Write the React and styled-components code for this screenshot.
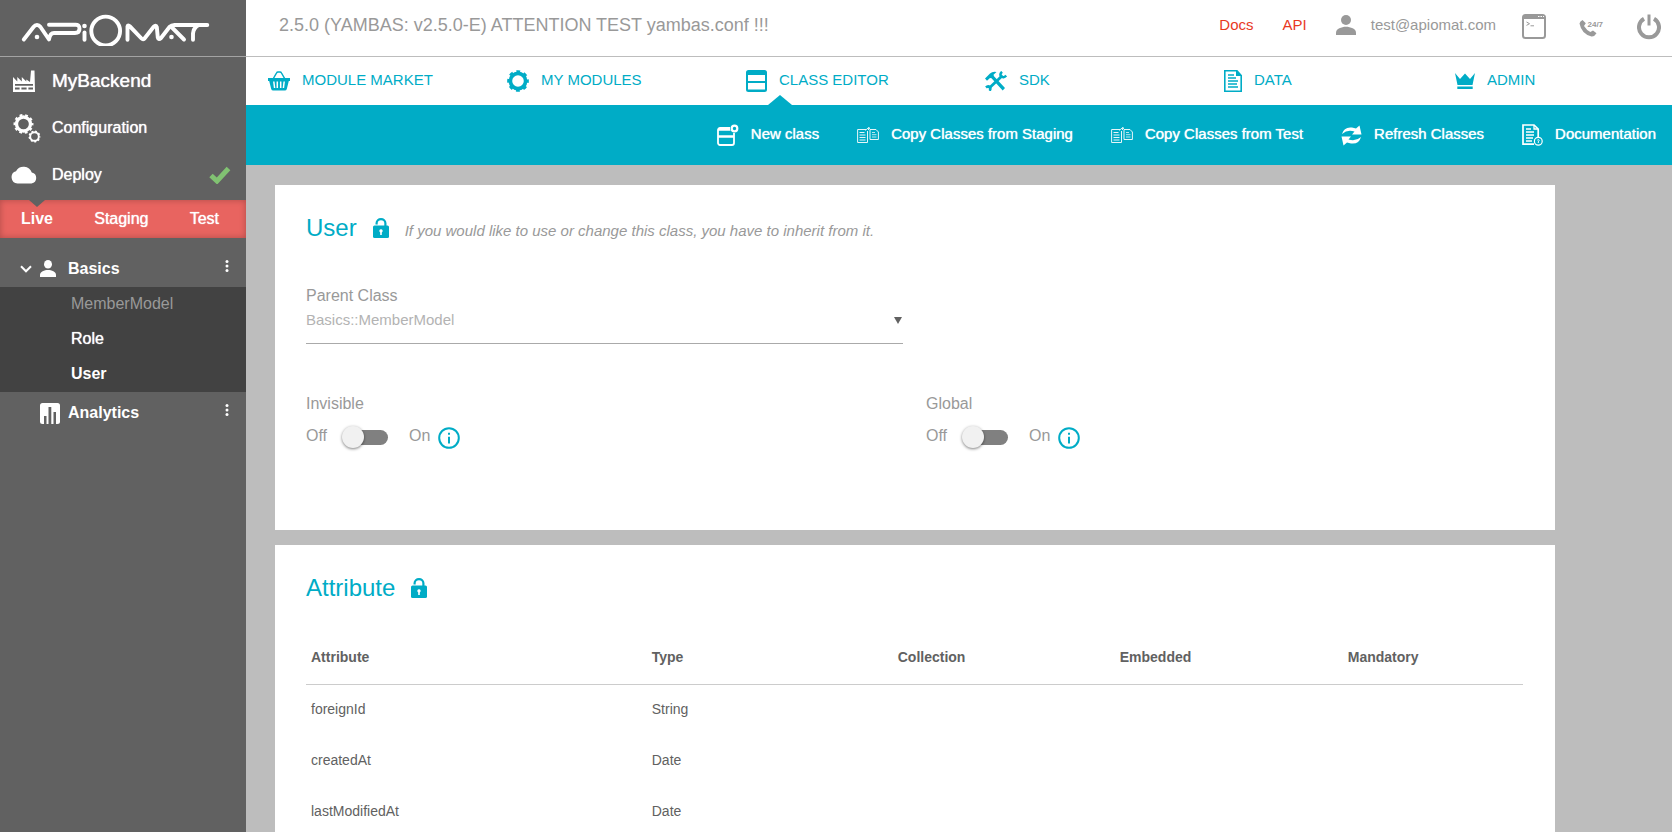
import React, { useState } from "react";
import styled, { createGlobalStyle, css } from "styled-components";

const teal = "#00acc6";
const gray = "#999";

const GlobalStyle = createGlobalStyle`
  * {
    box-sizing: border-box;
  }
  body {
    margin: 0;
    font-family: "Liberation Sans", Arial, sans-serif;
    font-size: 16px;
    line-height: 20px;
    color: ${gray};
    background: #bdbdbd;
  }
  svg {
    display: block;
    flex-shrink: 0;
  }
  a {
    color: inherit;
    text-decoration: none;
  }
  button {
    padding: 0;
    border: 0;
    background: none;
    color: inherit;
    font: inherit;
    cursor: pointer;
  }
`;

const Page = styled.div`
  display: flex;
  height: 100vh;
  overflow: hidden;
`;

/* ---------- sidebar ---------- */

const Sidebar = styled.aside`
  width: 246px;
  flex-shrink: 0;
  background: #616161;
  color: #fff;
`;

const LogoLink = styled.a`
  display: flex;
  height: 57px;
  padding: 14px 20px 0;
  border-bottom: 1px solid #a3a3a3;
`;

const MainMenu = styled.nav`
  display: flex;
  flex-direction: column;
  padding-bottom: 2px;
`;

const MenuLink = styled.a`
  display: flex;
  align-items: center;
  height: 47px;
  padding: 0 15px 0 11px;
  font-size: ${props => (props.$large ? "19px" : "16px")};
  text-shadow: 0 0 1px #fff;
`;

const MenuIcon = styled.span`
  display: flex;
  width: 41px;
`;

const Status = styled.span`
  margin-left: auto;
`;

const Stages = styled.nav`
  display: flex;
  justify-content: space-between;
  align-items: center;
  height: 38px;
  padding: 0 27px 0 21px;
  background: #e86460;
  box-shadow: inset 0 0 6px rgba(0, 0, 0, 0.25);
`;

const Stage = styled.button`
  position: relative;
  height: 38px;
  text-shadow: 0 0 1px #fff;
  ${props =>
    props.$active &&
    css`
      font-weight: 700;
      text-shadow: none;
      &::before {
        content: "";
        position: absolute;
        top: 0;
        left: 50%;
        margin-left: -8px;
        border: 8px solid transparent;
        border-top: 7px solid #616161;
        border-bottom: 0;
      }
    `}
`;

const Module = styled.div`
  display: flex;
  align-items: center;
  height: ${props => (props.$open ? "49px" : "42px")};
  padding: ${props => (props.$open ? "12px 15px 0 20px" : "0 15px 0 20px")};
  font-weight: 700;
`;

const Toggle = styled.button`
  display: flex;
  width: 20px;
`;

const ModuleIcon = styled.span`
  display: flex;
  width: 28px;
`;

const MoreButton = styled.button`
  margin-left: auto;
  padding-bottom: 6px;
`;

const ClassList = styled.ul`
  margin: 0;
  padding: 0;
  list-style: none;
  background: #424242;
`;

const ClassItem = styled.li`
  height: 35px;
  padding-left: 71px;
  line-height: 33px;
  color: ${props => (props.$muted ? gray : "#fff")};
  font-weight: ${props => (props.$active ? 700 : 400)};
  text-shadow: ${props => (props.$muted || props.$active ? "none" : "0 0 1px #fff")};
`;

/* ---------- header and navigation ---------- */

const Body = styled.div`
  flex: 1;
  min-width: 0;
  display: flex;
  flex-direction: column;
`;

const Header = styled.header`
  display: flex;
  align-items: center;
  height: 57px;
  flex-shrink: 0;
  padding: 0 11px 6px 33px;
  border-bottom: 1px solid #bdbdbd;
  background: #fff;
  font-size: 15px;
`;

const Version = styled.span`
  flex: 1;
  font-size: 18px;
`;

const HeaderLinks = styled.div`
  display: flex;
  align-items: center;
  gap: 29px;
`;

const DocLink = styled.a`
  color: #e8391f;
`;

const Account = styled.a`
  display: flex;
  align-items: center;
  gap: 15px;
`;

const Tools = styled.div`
  display: flex;
  align-items: center;
  gap: 33px;
  padding: 3px 0 0 26px;
`;

const NavBar = styled.nav`
  display: grid;
  grid-template-columns: repeat(4, 239fr) 231fr 239fr;
  height: 48px;
  flex-shrink: 0;
  background: #fff;
  color: ${teal};
  font-size: 15px;
`;

const NavLink = styled.a`
  position: relative;
  display: flex;
  align-items: center;
  gap: 12px;
  padding-left: 22px;
  ${props =>
    props.$active &&
    css`
      &::after {
        content: "";
        position: absolute;
        left: 44px;
        bottom: 0;
        border: 12px solid transparent;
        border-top: 0;
        border-bottom: 10px solid ${teal};
      }
    `}
`;

const ItemText = styled.span`
  padding-bottom: 2px;
`;

const ActionBar = styled.div`
  display: flex;
  justify-content: flex-end;
  align-items: center;
  gap: 38px;
  height: 60px;
  flex-shrink: 0;
  padding-right: 16px;
  background: ${teal};
  color: #fff;
  font-size: 15px;
  text-shadow: 0 0 1px #fff;
`;

const Action = styled.button`
  display: flex;
  align-items: center;
  gap: 12px;
  text-shadow: inherit;
`;

/* ---------- content ---------- */

const Content = styled.main`
  flex: 1;
  min-height: 0;
  display: flex;
  flex-direction: column;
  gap: 15px;
  padding: 20px 117px 0 29px;
  overflow: hidden;
`;

const Card = styled.section`
  flex-shrink: 0;
  padding: 24px 32px 72px 31px;
  background: #fff;
`;

const CardHead = styled.div`
  display: flex;
  align-items: center;
  gap: 16px;
  height: 38px;
`;

const Title = styled.h2`
  margin: 0;
  color: ${teal};
  font-size: 24px;
  font-weight: 400;
`;

const Hint = styled.em`
  padding-top: 6px;
  font-size: 15px;
`;

const Columns = styled.div`
  display: grid;
  grid-template-columns: 1fr 1fr;
  column-gap: 23px;
  row-gap: 50px;
  padding-top: 39px;
`;

const ParentField = styled.div`
  grid-column: 1;
  position: relative;
`;

const Label = styled.label`
  display: block;
`;

const Select = styled.select`
  display: block;
  width: 100%;
  height: 38px;
  padding: 0 20px 10px 0;
  border: 0;
  border-bottom: 1px solid #aaa;
  border-radius: 0;
  appearance: none;
  background: #fff;
  color: #b3b3b3;
  opacity: 1;
  font: inherit;
  font-size: 15px;
`;

const Caret = styled.span`
  position: absolute;
  right: 1px;
  bottom: 20px;
  border: 4px solid transparent;
  border-top: 7px solid #616161;
  border-bottom: 0;
  pointer-events: none;
`;

const ToggleField = styled.div`
  grid-column: ${props => props.$column};
`;

const SwitchRow = styled.div`
  display: flex;
  align-items: center;
  height: 44px;
  padding-bottom: 1px;
`;

const Switch = styled.input`
  position: relative;
  width: 44px;
  height: 15px;
  margin: 3px 21px 0 17px;
  border-radius: 8px;
  appearance: none;
  background: #808080;
  cursor: pointer;
  &::before {
    content: "";
    position: absolute;
    top: -4px;
    left: ${props => (props.checked ? "22px" : "-2px")};
    width: 22px;
    height: 22px;
    border-radius: 50%;
    background: #f1f1f1;
    box-shadow: 0 1px 3px rgba(0, 0, 0, 0.5);
  }
`;

const InfoButton = styled.button`
  margin-left: 8px;
  padding-top: 5px;
`;

const Table = styled.table`
  width: 100%;
  margin-top: 22px;
  border-collapse: collapse;
  table-layout: fixed;
  color: #616161;
  font-size: 14px;
  th,
  td {
    padding: 0 5px;
    text-align: left;
  }
  th {
    height: 55px;
    padding-top: 1px;
    border-bottom: 1px solid #ccc;
  }
  td {
    height: 51px;
    padding-bottom: 2px;
  }
`;

const Col = styled.col`
  width: ${props => props.$width};
`;

/* ---------- icons ---------- */

const Logo = () => (
  <svg width="190" height="32" viewBox="20 14 190 32" fill="none" stroke="#fff" strokeWidth="3.9" strokeLinecap="round" strokeLinejoin="round" role="img" aria-label="ApiOmat">
    <path d="M23.800 39.500 33.500 27Q35 25 37 25T40.500 27L49 39.500Q50 33 54 33H75Q79.500 33 79.500 28.700T75 24.700H49" />
    <path d="M84.500 32.500V39.800" />
    <circle cx="105.700" cy="31" r="14.400" />
    <path d="M127.500 39.800V26.500Q128 24.500 130 26.500L141.500 38.500Q143 40 144.500 38.500L153.500 27Q156 24.500 156.800 27L157.800 37.500Q158.500 40.500 161 38L169.500 27Q171.500 25 174.500 25H207.300" />
    <path d="M171.500 27 184 39.500M193 39.800V33.500Q193.500 28 198.500 25" />
    <g fill="#fff" stroke="none">
      <circle cx="37" cy="37" r="2.300" />
      <circle cx="84.500" cy="26" r="2.300" />
      <circle cx="171.500" cy="37" r="2.300" />
    </g>
  </svg>
);

const FactoryIcon = () => (
  <svg width="26" height="24" viewBox="0 0 26 24">
    <path fill="#fff" fillRule="evenodd" d="M2 23V8l4.300 4.500V8l4.500 4.500V8l4.500 4.500V10.500L19 13l1-11.500h3.500L24 23zM4 15v1.800h18V15zM4 18.600v2h4.600v-2zm6.400 0v2h5.200v-2zm7 0v2H22v-2z" />
  </svg>
);

const Gear = ({ cx, cy, r, w, teeth }) => {
  const outer = r + w / 2;
  const step = (2 * Math.PI * outer) / teeth;
  return (
    <g fill="none" stroke="currentColor">
      <circle cx={cx} cy={cy} r={r} strokeWidth={w} />
      <circle cx={cx} cy={cy} r={outer} strokeWidth={w * 0.8} strokeDasharray={`${step * 0.5} ${step * 0.5}`} strokeDashoffset={step * 0.25} />
    </g>
  );
};

const ConfigIcon = () => (
  <svg width="30" height="30" viewBox="0 0 30 30">
    <Gear cx={12.500} cy={11} r={7} w={3.300} teeth={10} />
    <Gear cx={23.500} cy={23.500} r={4.300} w={1.900} teeth={9} />
  </svg>
);

const CloudIcon = () => (
  <svg width="26" height="18" viewBox="0 0 26 18">
    <path fill="#fff" d="M6.500 17.500A6.300 6.300 0 0 1 5 5.200 8.700 8.700 0 0 1 20.800 6.500 5.600 5.600 0 0 1 20.500 17.500z" />
  </svg>
);

const CheckIcon = () => (
  <svg width="22" height="18" viewBox="0 0 22 18">
    <path d="M2 9.500 8 15 19.500 2.500" fill="none" stroke="#81c272" strokeWidth="5" />
  </svg>
);

const ChevronIcon = () => (
  <svg width="12" height="8" viewBox="0 0 12 8">
    <path d="M1 1.200 6 6.300 11 1.200" fill="none" stroke="#fff" strokeWidth="2" />
  </svg>
);

const PersonIcon = ({ width, height }) => (
  <svg width={width} height={height} viewBox="0 0 20 20" preserveAspectRatio="none">
    <circle cx="10" cy="5" r="5" fill="currentColor" />
    <path fill="currentColor" d="M0 20v-2.500C0 14 5.500 11.800 10 11.800S20 14 20 17.500V20z" />
  </svg>
);

const AnalyticsIcon = () => (
  <svg width="20" height="22" viewBox="0 0 20 22">
    <rect y="1" width="20" height="21" rx="2.500" fill="#fff" />
    <path fill="#616161" d="M4 14h2.500v8H4zM8.500 5h2.800v17H8.500zM13.500 10h2.500v12h-2.500z" />
  </svg>
);

const DotsIcon = () => (
  <svg width="8" height="14" viewBox="0 0 8 14" fill="#fff">
    <circle cx="4" cy="2.500" r="1.500" />
    <circle cx="4" cy="7" r="1.500" />
    <circle cx="4" cy="11.500" r="1.500" />
  </svg>
);

const TerminalIcon = () => (
  <svg width="24" height="25" viewBox="0 0 24 25">
    <rect x="1" y="1" width="22" height="23" rx="2.500" fill="none" stroke={gray} strokeWidth="2" />
    <path fill={gray} d="M1 1h22v4H1z" />
    <path d="M16 2.500h1.500M18.500 2.500H20M21 2.500h1" stroke="#fff" />
    <path d="M4.500 8 7.500 9.700 4.500 11.400M8.500 11.800H12" fill="none" stroke={gray} />
  </svg>
);

const PhoneIcon = () => (
  <svg width="25" height="20" viewBox="0 0 25 20">
    <path fill={gray} d="M3.500 3 6.800 6.200 5 9Q7.500 13 11.300 15L14 13.400 17.500 16.300Q15.500 19.800 12.500 19.500 2.500 17 .500 6.500 1 4 3.500 3z" />
    <text x="8.500" y="9.500" fill={gray} fontSize="8" fontWeight="700" fontFamily="Liberation Sans Narrow, Liberation Sans, sans-serif">24/7</text>
  </svg>
);

const PowerIcon = () => (
  <svg width="24" height="26" viewBox="0 0 24 26" fill="none" stroke={gray}>
    <path d="M7 4.700A10 10 0 1 0 17 4.700" strokeWidth="4" />
    <path d="M12 .500V11.500" strokeWidth="3" />
  </svg>
);

const BasketIcon = () => (
  <svg width="22" height="20" viewBox="0 0 22 20">
    <path fill="none" stroke={teal} strokeWidth="1.500" d="M4.500 9 8.500 2Q9 1 10 1h2q1 0 1.500 1l4 7" />
    <path fill={teal} d="M0 7h22v3h-1.200l-2 8q-.400 1.500-2 1.500H5.200q-1.600 0-2-1.500l-2-8H0z" />
    <path stroke="#fff" strokeWidth="1.500" d="M5.800 10.500 6.600 17M9.300 10.500V17M12.700 10.500V17M16.200 10.500 15.400 17" />
  </svg>
);

const GearIcon = () => (
  <svg width="22" height="22" viewBox="0 0 22 22">
    <Gear cx={11} cy={11} r={7.600} w={3.600} teeth={8} />
  </svg>
);

const ClassIcon = () => (
  <svg width="21" height="22" viewBox="0 0 21 22">
    <path fill={teal} fillRule="evenodd" d="M2.500 0h16A2.500 2.500 0 0 1 21 2.500v17a2.500 2.500 0 0 1-2.500 2.500h-16A2.500 2.500 0 0 1 0 19.500v-17A2.500 2.500 0 0 1 2.500 0zM2 5v6h17V5zm0 8v6.500h17V13z" />
  </svg>
);

const ToolsIcon = () => (
  <svg width="22" height="20" viewBox="0 0 22 20">
    <path fill={teal} d="M0 7.500 5 2.500Q7.500 .200 11.500 1L8.500 3.800 9 5.300 20 17 17.700 19.500 6.500 7.300 5 7 2 9.800z" />
    <path fill="none" stroke={teal} strokeWidth="2.800" d="M17.500 4.500 3.800 17.500" />
    <path fill="none" stroke={teal} strokeWidth="2.500" d="M17 .800Q14.500 3 16 5.200 18.500 7.500 21.200 4.500M1 16.500Q3 14.500 5 16.200 6 18 4.500 19.800" />
  </svg>
);

const DataIcon = () => (
  <svg width="18" height="22" viewBox="0 0 18 22" fill="none" stroke={teal}>
    <path strokeWidth="1.600" d="M.800.800H13L17.200 5.500V21.200H.800z" />
    <path fill={teal} stroke="none" d="M12 0 18 6H12z" />
    <path strokeWidth="1.300" d="M4 5h6M4 8h8M4 11h10M4 14h9M4 17h10" />
  </svg>
);

const CrownIcon = () => (
  <svg width="20" height="18" viewBox="0 0 20 18" fill={teal}>
    <path d="M0 1 5 7 10 1.500 15 7 20 1 17.500 13H2.500z" />
    <path d="M2.300 14.500h15.400V17H2.300z" />
  </svg>
);

const NewClassIcon = () => (
  <svg width="22" height="22" viewBox="0 0 22 22" fill="none" stroke="#fff">
    <rect x="1" y="4" width="16" height="17" rx="2" strokeWidth="1.800" />
    <path d="M1 5.500H14M1 12.500H17" strokeWidth="2.600" />
    <circle cx="17.500" cy="4.500" r="3.800" fill={teal} stroke={teal} strokeWidth="1.500" />
    <circle cx="17.500" cy="4.500" r="2.800" strokeWidth="2.200" />
  </svg>
);

const CopyIcon = () => (
  <svg width="22" height="17" viewBox="0 0 22 17" fill="none" stroke="#fff" opacity="0.900">
    <path d="M9 2.500H.600V15.500H10.500V4" />
    <path d="M2.500 5.500h5M2.500 8h6M2.500 10.500h6M2.500 13h6" />
    <path d="M8.500 3.500Q9.500 1 12.500 1.200M11 0 12.800 1.200 11 3" />
    <path d="M13 2.500h6L21.400 5v7.500H13z" />
    <path d="M15 5.500h3M15 7.700h4.500M15 10h4.500" strokeWidth="0.800" />
  </svg>
);

const RefreshIcon = () => (
  <svg width="21" height="21" viewBox="0 0 21 21" fill="#fff">
    <path d="M1 9Q3 1.500 11 2.500L15 3.500 18.500.500 20.500 9.500 11 9.500 13.500 6.500Q6.500 4 1 9z" />
    <path d="M20 12Q18 19.500 10 18.500L6 17.500 2.500 20.500.500 11.500 10 11.500 7.500 14.500Q14.500 17 20 12z" />
  </svg>
);

const DocIcon = () => (
  <svg width="21" height="22" viewBox="0 0 21 22" fill="none" stroke="#fff">
    <path d="M12 20.200H1V1H12L16.200 5V13" strokeWidth="1.700" />
    <path d="M12 1V5H16" strokeWidth="1.300" />
    <path d="M4 5h5M4 8h8M4 11h8M4 14h7M4 17h6" strokeWidth="1.300" />
    <circle cx="16.300" cy="17.300" r="3.900" strokeWidth="1.200" />
    <path d="M15.300 16.200Q16.500 15 17.200 16.300L16.300 17.800V19" />
  </svg>
);

const LockIcon = () => (
  <svg width="16" height="20" viewBox="0 0 16 20">
    <path fill="none" stroke={teal} strokeWidth="2.200" d="M3.600 6.600V5.200a4.400 4.100 0 0 1 8.800 0V8" />
    <rect y="7.500" width="16" height="12.500" rx="1.500" fill={teal} />
    <path fill="#fff" d="M8 11.200a1.700 1.700 0 0 1 .800 3.200V17H7.200v-2.600A1.700 1.700 0 0 1 8 11.200z" />
  </svg>
);

const InfoIcon = () => (
  <svg width="22" height="22" viewBox="0 0 22 22" fill="none" stroke={teal} strokeWidth="2">
    <circle cx="11" cy="11" r="9.800" />
    <path d="M11 9.800V16.500M11 5.800V7.800" />
  </svg>
);

/* ---------- data ---------- */

const navItems = [
  { name: "MODULE MARKET", Icon: BasketIcon },
  { name: "MY MODULES", Icon: GearIcon },
  { name: "CLASS EDITOR", Icon: ClassIcon, active: true },
  { name: "SDK", Icon: ToolsIcon },
  { name: "DATA", Icon: DataIcon },
  { name: "ADMIN", Icon: CrownIcon }
];

const actions = [
  { name: "New class", Icon: NewClassIcon },
  { name: "Copy Classes from Staging", Icon: CopyIcon },
  { name: "Copy Classes from Test", Icon: CopyIcon },
  { name: "Refresh Classes", Icon: RefreshIcon },
  { name: "Documentation", Icon: DocIcon }
];

const columns = [
  { name: "Attribute", width: "28%" },
  { name: "Type", width: "246px" },
  { name: "Collection", width: "222px" },
  { name: "Embedded", width: "228px" },
  { name: "Mandatory", width: "auto" }
];

const attributes = [
  { name: "foreignId", type: "String" },
  { name: "createdAt", type: "Date" },
  { name: "lastModifiedAt", type: "Date" }
];

const SwitchField = ({ id, label, column }) => {
  const [checked, setChecked] = useState(false);

  return (
    <ToggleField $column={column}>
      <Label htmlFor={id}>{label}</Label>
      <SwitchRow>
        <span>Off</span>
        <Switch
          id={id}
          type="checkbox"
          role="switch"
          checked={checked}
          onChange={e => setChecked(e.target.checked)}
        />
        <span>On</span>
        <InfoButton type="button" aria-label={`${label} info`}>
          <InfoIcon />
        </InfoButton>
      </SwitchRow>
    </ToggleField>
  );
};

const App = () => {
  const [stage, setStage] = useState("Live");

  return (
    <Page>
      <GlobalStyle />
      <Sidebar>
        <LogoLink href="#">
          <Logo />
        </LogoLink>
        <MainMenu>
          <MenuLink href="#backend" $large>
            <MenuIcon>
              <FactoryIcon />
            </MenuIcon>
            MyBackend
          </MenuLink>
          <MenuLink href="#configuration">
            <MenuIcon>
              <ConfigIcon />
            </MenuIcon>
            Configuration
          </MenuLink>
          <MenuLink href="#deploy">
            <MenuIcon>
              <CloudIcon />
            </MenuIcon>
            Deploy
            <Status>
              <CheckIcon />
            </Status>
          </MenuLink>
        </MainMenu>
        <Stages>
          {["Live", "Staging", "Test"].map(name => (
            <Stage
              key={name}
              type="button"
              $active={stage === name}
              onClick={() => setStage(name)}
            >
              {name}
            </Stage>
          ))}
        </Stages>
        <Module $open>
          <Toggle type="button" aria-label="Collapse Basics">
            <ChevronIcon />
          </Toggle>
          <ModuleIcon>
            <PersonIcon width={16} height={17} />
          </ModuleIcon>
          Basics
          <MoreButton type="button" aria-label="Basics menu">
            <DotsIcon />
          </MoreButton>
        </Module>
        <ClassList>
          <ClassItem $muted>
            <a href="#membermodel">MemberModel</a>
          </ClassItem>
          <ClassItem>
            <a href="#role">Role</a>
          </ClassItem>
          <ClassItem $active>
            <a href="#user">User</a>
          </ClassItem>
        </ClassList>
        <Module>
          <Toggle as="span" />
          <ModuleIcon>
            <AnalyticsIcon />
          </ModuleIcon>
          Analytics
          <MoreButton type="button" aria-label="Analytics menu">
            <DotsIcon />
          </MoreButton>
        </Module>
      </Sidebar>
      <Body>
        <Header>
          <Version>2.5.0 (YAMBAS: v2.5.0-E) ATTENTION TEST yambas.conf !!!</Version>
          <HeaderLinks>
            <DocLink href="#docs">Docs</DocLink>
            <DocLink href="#api">API</DocLink>
            <Account href="#account">
              <PersonIcon width={20} height={20} />
              test@apiomat.com
            </Account>
          </HeaderLinks>
          <Tools>
            <button type="button" aria-label="Console">
              <TerminalIcon />
            </button>
            <button type="button" aria-label="Support">
              <PhoneIcon />
            </button>
            <button type="button" aria-label="Log out">
              <PowerIcon />
            </button>
          </Tools>
        </Header>
        <NavBar>
          {navItems.map(({ name, Icon, active }) => (
            <NavLink key={name} href="#" $active={active}>
              <Icon />
              <ItemText>{name}</ItemText>
            </NavLink>
          ))}
        </NavBar>
        <ActionBar>
          {actions.map(({ name, Icon }) => (
            <Action key={name} type="button">
              <Icon />
              <ItemText>{name}</ItemText>
            </Action>
          ))}
        </ActionBar>
        <Content>
          <Card>
            <CardHead>
              <Title>User</Title>
              <LockIcon />
              <Hint>If you would like to use or change this class, you have to inherit from it.</Hint>
            </CardHead>
            <Columns>
              <ParentField>
                <Label htmlFor="parent">Parent Class</Label>
                <Select id="parent" disabled>
                  <option>Basics::MemberModel</option>
                </Select>
                <Caret />
              </ParentField>
              <SwitchField id="invisible" label="Invisible" column={1} />
              <SwitchField id="global" label="Global" column={2} />
            </Columns>
          </Card>
          <Card>
            <CardHead>
              <Title>Attribute</Title>
              <LockIcon />
            </CardHead>
            <Table>
              <colgroup>
                {columns.map(({ name, width }) => (
                  <Col key={name} $width={width} />
                ))}
              </colgroup>
              <thead>
                <tr>
                  {columns.map(({ name }) => (
                    <th key={name} scope="col">
                      {name}
                    </th>
                  ))}
                </tr>
              </thead>
              <tbody>
                {attributes.map(({ name, type }) => (
                  <tr key={name}>
                    <td>{name}</td>
                    <td>{type}</td>
                    <td />
                    <td />
                    <td />
                  </tr>
                ))}
              </tbody>
            </Table>
          </Card>
        </Content>
      </Body>
    </Page>
  );
};

export default App;
